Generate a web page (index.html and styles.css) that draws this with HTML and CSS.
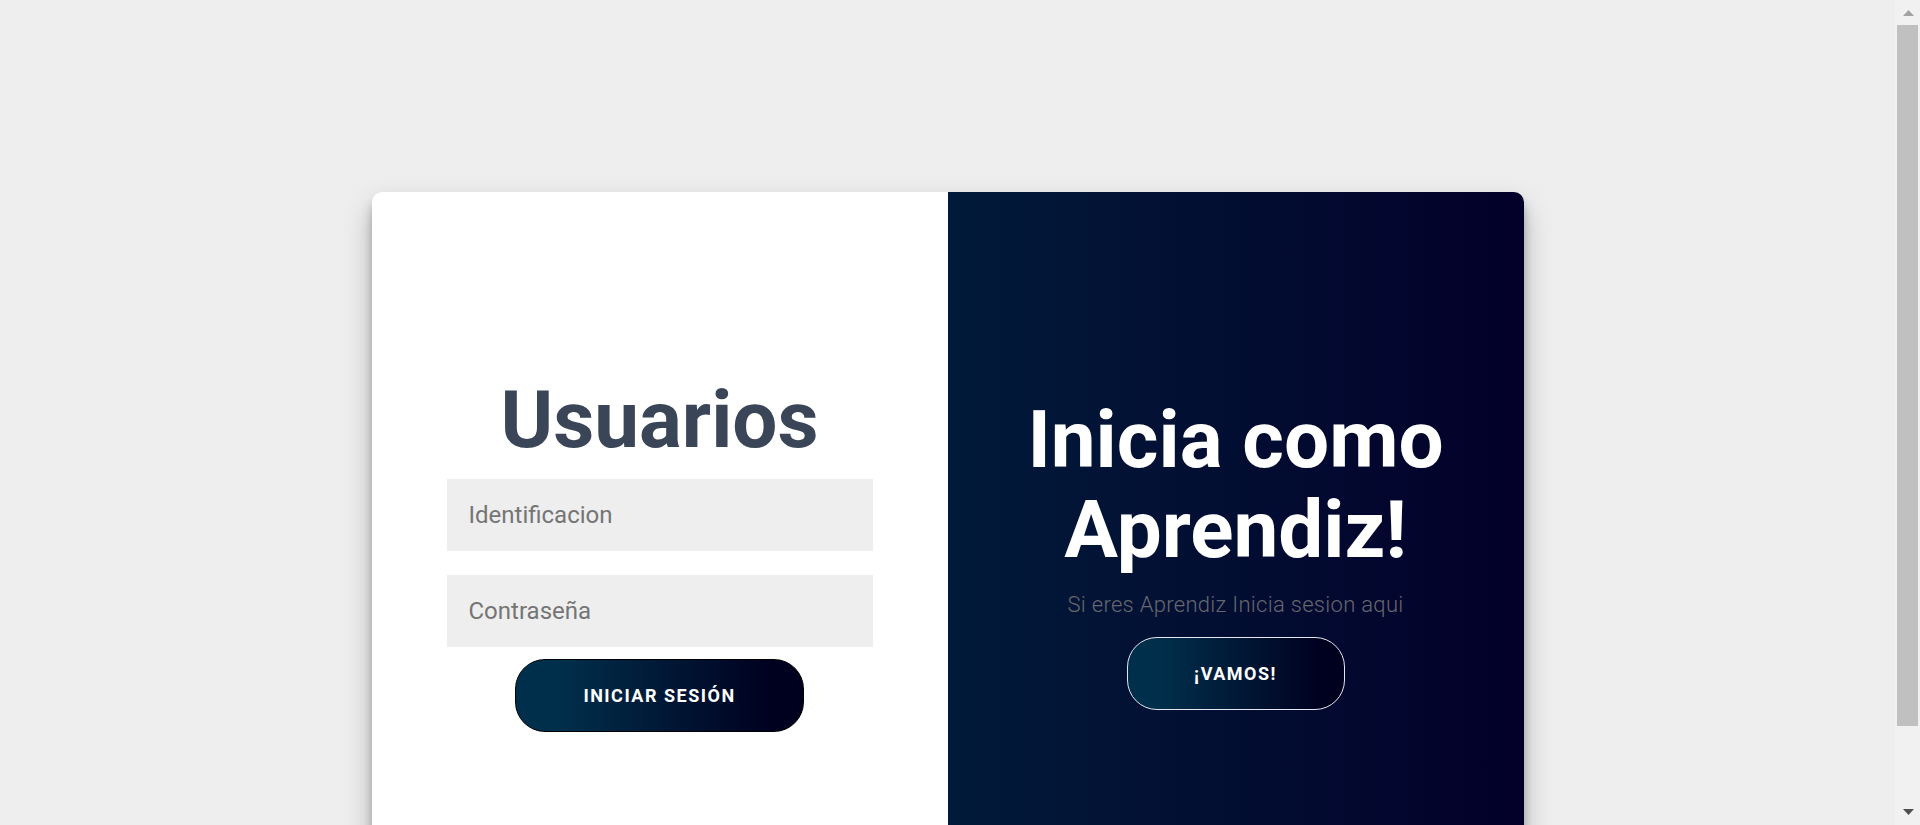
FILE: index.html
```html
<!DOCTYPE html>
<html lang="es">
<head>
<meta charset="utf-8">
<title>Login</title>
<link rel="stylesheet" href="styles.css">
</head>
<body>
<main class="page">
  <section class="card">
    <div class="panel panel-form">
      <form class="form">
        <h1 class="title">Usuarios</h1>
        <input class="field" type="text" placeholder="Identificacion">
        <input class="field field-last" type="password" placeholder="Contraseña">
        <button class="btn btn-primary" type="button">Iniciar Sesión</button>
      </form>
    </div>
    <div class="panel panel-overlay">
      <h1 class="overlay-title">Inicia como Aprendiz!</h1>
      <p class="overlay-text">Si eres Aprendiz Inicia sesion aqui</p>
      <button class="btn btn-ghost" type="button">¡Vamos!</button>
    </div>
  </section>
</main>
<aside class="scrollbar" aria-hidden="true">
  <div class="sb-button">
    <svg width="11" height="6" viewBox="0 0 11 6"><polygon points="5.5,0 11,6 0,6" fill="#a3a3a3"/></svg>
  </div>
  <div class="sb-thumb"></div>
  <div class="sb-rest"></div>
  <div class="sb-button sb-down">
    <svg width="11" height="6" viewBox="0 0 11 6"><polygon points="0,0 11,0 5.5,6" fill="#505050"/></svg>
  </div>
</aside>
</body>
</html>
```

FILE: styles.css
```css
* { box-sizing: border-box; }

html, body {
  margin: 0;
  padding: 0;
}

body {
  background: #eeeeee;
  font-family: Roboto, "Liberation Sans", Arial, sans-serif;
  padding-right: 25px;
}

.page {
  padding: 192px 0 0;
}

.card {
  width: 1152px;
  height: 720px;
  margin: 0 auto;
  display: flex;
  border-radius: 10px;
  overflow: hidden;
  background: #ffffff;
  box-shadow: 0 14px 28px rgba(0, 0, 0, 0.25), 0 10px 10px rgba(0, 0, 0, 0.22);
}

.panel {
  flex: 1 1 0;
  display: flex;
  flex-direction: column;
  align-items: center;
  justify-content: center;
}

.form {
  display: flex;
  flex-direction: column;
  align-items: center;
  width: 426px;
}

.title {
  margin: 0;
  font-size: 80px;
  line-height: normal;
  font-weight: 700;
  color: #3a4657;
}

.field {
  width: 426px;
  height: 72px;
  margin: 12px 0;
  padding: 0 22px;
  border: none;
  background: #eeeeee;
  font-family: Roboto, "Liberation Sans", Arial, sans-serif;
  font-size: 24px;
  color: #333;
  outline: none;
}

.field::placeholder {
  color: #757575;
}

.btn {
  height: 73px;
  border-radius: 30px;
  font-family: Roboto, "Liberation Sans", Arial, sans-serif;
  font-size: 18px;
  font-weight: 700;
  letter-spacing: 1.5px;
  text-transform: uppercase;
  color: #ffffff;
  cursor: pointer;
  background: linear-gradient(to right, #002f4b 15%, #00001f 90%);
}

.btn-primary {
  width: 289px;
  border: 1px solid #000;
}

.btn-ghost {
  width: 218px;
  border: 1px solid #e6e6ee;
}

.panel-overlay {
  background: linear-gradient(to right, #011a3a, #03002a);
  color: #ffffff;
  text-align: center;
}

.overlay-title {
  margin: 0;
  font-size: 80px;
  line-height: 90px;
  font-weight: 700;
  color: #ffffff;
}

.overlay-text {
  margin: 18px 0 20px;
  font-size: 22px;
  font-weight: 300;
  letter-spacing: 0.3px;
  line-height: 24px;
  color: #67676f;
}

/* static rendering of the browser's classic scrollbar */
.scrollbar {
  position: fixed;
  top: 0;
  right: 0;
  width: 25px;
  height: 100vh;
  background: #f1f1f1;
  display: flex;
  flex-direction: column;
  align-items: stretch;
}

.sb-button {
  height: 25px;
  flex: 0 0 25px;
  display: flex;
  justify-content: center;
  align-items: flex-start;
  padding: 10px 0 0 2px;
}

.sb-down {
  align-items: flex-end;
  padding: 0 0 10px 2px;
}

.sb-button svg {
  display: block;
}

.sb-thumb {
  flex: 0 0 701px;
  margin: 0 2px 0 2px;
  background: #c0c0c0;
}

.sb-rest {
  flex: 1 1 auto;
}
```
